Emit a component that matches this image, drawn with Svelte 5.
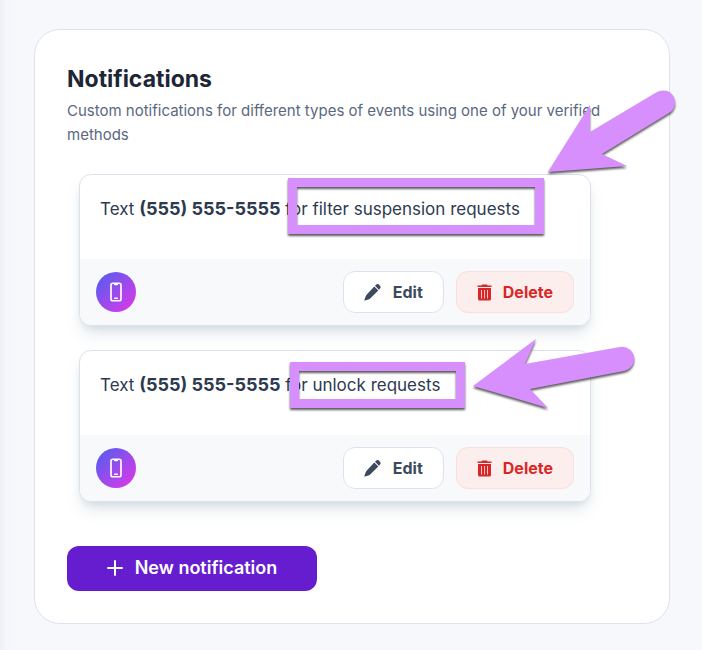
<script>
  const notifications = [
    {
      id: 1,
      phone: '(555) 555-5555',
      event: 'filter suspension requests',
      box: { left: 208, top: 3, width: 256, height: 56 },
      arrow: 'M468 -3L510 -70V-43L577 -83A12 12 0 0 1 589 -62L522 -21L547 -9Z'
    },
    {
      id: 2,
      phone: '(555) 555-5555',
      event: 'unlock requests',
      box: { left: 210, top: 11, width: 175, height: 46 },
      arrow: 'M393 35L456 -12L445 13L540 -4A12 12 0 0 1 544 20L450 38L468 57Z'
    }
  ];
</script>

<main class="page">
  <section class="panel" aria-labelledby="title">
    <h1 id="title">Notifications</h1>
    <p class="intro">
      Custom notifications for different types of events using one of your verified methods
    </p>

    <ul class="list">
      {#each notifications as item (item.id)}
        <li class="item">
          <p class="message">Text <strong>{item.phone}</strong> for {item.event}</p>
          <div class="footer">
            <span class="badge">
              <svg width="20" height="20" viewBox="0 0 24 24" fill="none" stroke="#fff" stroke-width="2" stroke-linecap="round" stroke-linejoin="round" aria-hidden="true">
                <path d="M10.5 1.5H8.25A2.25 2.25 0 0 0 6 3.75v16.5a2.25 2.25 0 0 0 2.25 2.25h7.5A2.25 2.25 0 0 0 18 20.25V3.75a2.25 2.25 0 0 0-2.25-2.25H13.5m-3 0V3h3V1.5m-3 0h3m-3 18h3" />
              </svg>
            </span>
            <button type="button" class="btn">
              <svg width="17" height="17" viewBox="0 0 17 17" fill="currentColor" aria-hidden="true">
                <path d="M11.600 1.200a2.700 2.700 0 0 1 4 0a2.700 2.700 0 0 1 0 3.900l-.6.6-4-3.900ZM10.300 2.500l4 3.900-7.600 7.600c-.7.7-1.500 1.200-2.400 1.500l-3.300 1.100a.5.500 0 0 1-.6-.6l1.100-3.300c.3-.9.800-1.700 1.500-2.400Z" />
              </svg>
              Edit
            </button>
            <button type="button" class="btn delete">
              <svg width="15" height="17" viewBox="0 0 15 17" aria-hidden="true">
                <path fill="currentColor" d="M5 .5h5l.6 1H14.500v1.500H.5V1.500h3.900ZM1 4h13V15a1.500 1.500 0 0 1-1.500 1.500H2.500A1.500 1.500 0 0 1 1 15Z" />
                <path stroke="#fdeeee" stroke-width=".8" d="M4.500 6v8.500M7.500 6v8.500M10.500 6v8.500" />
              </svg>
              Delete
            </button>
          </div>
          <div class="callout" aria-hidden="true">
            <span
              class="frame"
              style:left="{item.box.left}px"
              style:top="{item.box.top}px"
              style:width="{item.box.width}px"
              style:height="{item.box.height}px"
            ></span>
            <svg class="arrow"><path d={item.arrow} /></svg>
          </div>
        </li>
      {/each}
    </ul>

    <button type="button" class="add">
      <svg width="16" height="16" viewBox="0 0 16 16" fill="none" stroke="currentColor" stroke-width="2" stroke-linecap="round" aria-hidden="true">
        <path d="M8 1v14M1 8h14" />
      </svg>
      New notification
    </button>
  </section>
</main>

<style>
  :global(body) {
    margin: 0;
    background: #f7f8fb;
  }
  .page {
    box-sizing: border-box;
    min-height: 100vh;
    padding: 29px 32px 26px 34px;
    background: linear-gradient(90deg, #eeeff5 0, #f5f6fa 6px, #f7f8fb 14px);
    font-family: Inter, 'Liberation Sans', sans-serif;
    color: #2d3a4f;
  }
  .panel {
    padding: 33px 32px 32px;
    border: 1px solid #dde3ed;
    border-radius: 26px;
    background: #fff;
  }
  h1 {
    margin: 0;
    font-size: 23px;
    line-height: 32px;
    font-weight: 700;
    color: #1e2636;
  }
  .intro {
    margin: 4px 0 0;
    font-size: 15px;
    line-height: 24px;
    color: #5a6880;
  }
  .list {
    display: flex;
    flex-direction: column;
    gap: 24px;
    margin: 27px 0 44px;
    padding: 0;
    list-style: none;
  }
  .item {
    position: relative;
    width: 510px;
    max-width: 100%;
    margin-left: 12px;
    border: 1px solid #dbe2ee;
    border-radius: 12px;
    background: #fff;
    box-shadow: 0 10px 16px -3px rgba(100, 125, 150, 0.2), 0 4px 6px -2px rgba(100, 125, 150, 0.14);
  }
  .message {
    margin: 0;
    padding: 20px 20px 36px;
    font-size: 17px;
    line-height: 28px;
  }
  strong {
    font-size: 18px;
    font-weight: 700;
  }
  .footer {
    display: flex;
    align-items: center;
    gap: 12px;
    padding: 12px 16px;
    border-radius: 0 0 11px 11px;
    background: #f7f9fb;
  }
  .badge {
    display: grid;
    place-items: center;
    width: 40px;
    height: 40px;
    margin-right: auto;
    border-radius: 50%;
    background: linear-gradient(135deg, #5b5bf0 10%, #d63ae8 90%);
  }
  .btn,
  .add {
    display: flex;
    align-items: center;
    justify-content: center;
    gap: 12px;
    border-radius: 12px;
    font-family: inherit;
    cursor: pointer;
  }
  .btn {
    box-sizing: border-box;
    height: 42px;
    padding: 0 20px;
    border: 1px solid #dfe2ea;
    background: #fff;
    font-size: 16px;
    font-weight: 700;
    line-height: 24px;
    color: #3d4a5d;
  }
  .delete {
    gap: 11px;
    border-color: #fcdcdc;
    background: #fdeeee;
    color: #d92626;
  }
  .callout {
    position: absolute;
    inset: 0;
    pointer-events: none;
    filter: drop-shadow(0 2px 1px rgba(0, 0, 0, 0.65));
  }
  .frame {
    position: absolute;
    box-sizing: border-box;
    border: 9px solid #d78ffd;
  }
  .arrow {
    position: absolute;
    inset: 0;
    width: 100%;
    height: 100%;
    overflow: visible;
    fill: #d78ffd;
  }
  .add {
    width: 250px;
    max-width: 100%;
    height: 45px;
    padding: 0 16px 2px;
    border: 0;
    background: #651dcf;
    font-size: 18px;
    font-weight: 600;
    line-height: 28px;
    color: #fff;
  }
</style>
